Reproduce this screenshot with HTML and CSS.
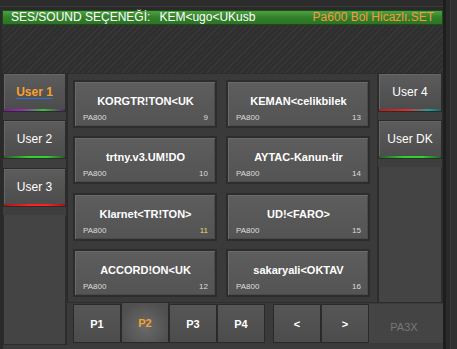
FILE: index.html
```html
<!DOCTYPE html>
<html>
<head>
<meta charset="utf-8">
<link rel="stylesheet" href="styles.css">
</head>
<body>
<div class="screen">
  <div class="frame">
    <div class="topline"></div>
    <div class="header">
      <div class="hleft"><span class="hlabel">SES/SOUND SEÇENEĞİ:</span><span class="hval">KEM&lt;ugo&lt;UKusb</span></div>
      <div class="hright">Pa600 Bol Hicazlı.SET</div>
    </div>
    <div class="stripes"></div>
    <div class="main">
      <div class="lcol">
        <div class="ubtn active"><span>User 1</span><i class="bar b1"></i></div>
        <div class="ubtn"><span>User 2</span><i class="bar b2"></i></div>
        <div class="ubtn"><span>User 3</span><i class="bar b3"></i></div>
        <div class="fill"></div>
      </div>
      <div class="panel">
        <div class="card"><div class="title">KORGTR!TON&lt;UK</div><div class="meta"><span>PA800</span><span>9</span></div></div>
        <div class="card"><div class="title">KEMAN&lt;celikbilek</div><div class="meta"><span>PA800</span><span>13</span></div></div>
        <div class="card"><div class="title">trtny.v3.UM!DO</div><div class="meta"><span>PA800</span><span>10</span></div></div>
        <div class="card"><div class="title">AYTAC-Kanun-tir</div><div class="meta"><span>PA800</span><span>14</span></div></div>
        <div class="card"><div class="title">Klarnet&lt;TR!TON&gt;</div><div class="meta"><span>PA800</span><span class="num-y">11</span></div></div>
        <div class="card"><div class="title">UD!&lt;FARO&gt;</div><div class="meta"><span>PA800</span><span>15</span></div></div>
        <div class="card"><div class="title">ACCORD!ON&lt;UK</div><div class="meta"><span>PA800</span><span>12</span></div></div>
        <div class="card"><div class="title">sakaryali&lt;OKTAV</div><div class="meta"><span>PA800</span><span>16</span></div></div>
      </div>
      <div class="rcol">
        <div class="ubtn"><span>User 4</span><i class="bar b4"></i></div>
        <div class="ubtn"><span>User DK</span><i class="bar b5"></i></div>
        <div class="fill"></div>
      </div>
      <div class="bottom">
        <div class="pbtn">P1</div>
        <div class="pbtn sel">P2</div>
        <div class="pbtn">P3</div>
        <div class="pbtn">P4</div>
        <div class="sep"></div>
        <div class="pbtn">&lt;</div>
        <div class="pbtn">&gt;</div>
        <div class="pa3x">PA3X</div>
      </div>
    </div>
  </div>
  <div class="rightedge"></div>
</div>
</body>
</html>
```

FILE: styles.css
```css
* { box-sizing: border-box; margin: 0; padding: 0; }
html, body { width: 457px; height: 349px; overflow: hidden; }
body {
  background: #2a2a2a;
  font-family: "Liberation Sans", Arial, sans-serif;
  color: #fff;
}
.screen { display: flex; height: 349px; }
.frame { width: 443px; display: flex; flex-direction: column; }
.rightedge {
  width: 14px;
  border-left: 3px solid #1e1e1e;
  background: linear-gradient(90deg, #2a2a2a 0 4px, #3a3a3a 4px 5px, #303030 5px);
}
.topline {
  height: 10px;
  background: linear-gradient(#2c2c2c 0 6px, #3a3a3a 6px 7px, #2a2a2a 7px);
}
.header {
  height: 15px;
  margin-left: 2px;
  border: 1px solid #1c4a18;
  background: linear-gradient(#4fa042, #32802a 50%, #2c7424);
  display: flex;
  align-items: center;
  justify-content: space-between;
  padding: 0 8px 0 8px;
  font-size: 12px;
  line-height: 13px;
}
.hlabel { color: #fff; }
.hval { color: #fff; margin-left: 9px; }
.hright { color: #f59a40; }
.stripes {
  height: 48px;
  margin-left: 2px;
  background: repeating-linear-gradient(135deg, #2f2f2f 0 2px, #383838 2px 3px, #2f2f2f 3px 4px);
}
.main {
  flex: 1;
  display: grid;
  grid-template-columns: 64px 311px 65px;
  grid-template-rows: 230px 42px;
  margin-left: 3px;
  background: #3c3c3c;
}
.lcol {
  grid-row: 1 / 3;
  grid-column: 1;
  display: flex;
  flex-direction: column;
  gap: 8px;
  background: #3e3e3e;
  border-right: 1px solid #2c2c2c;
}
.lcol .ubtn:nth-child(3) { margin-top: 1px; }
.rcol {
  grid-row: 1;
  grid-column: 3;
  display: flex;
  flex-direction: column;
  gap: 8px;
  background: #3e3e3e;
  border-right: 1px solid #2c2c2c;
}
.ubtn {
  position: relative;
  height: 39px;
  border: 1px solid #2b2b2b;
  background: linear-gradient(#5c5c5c, #525252 60%, #4c4c4c);
  box-shadow: inset 1px 1px 0 #666;
  display: flex;
  align-items: center;
  justify-content: center;
  font-size: 12px;
  color: #fff;
  padding-bottom: 2px;
}
.ubtn.active span {
  color: #f7a030;
  font-weight: bold;
  text-decoration: underline;
  text-decoration-color: #2f6fd0;
  text-underline-offset: 2px;
}
.bar { position: absolute; left: 0; right: 0; bottom: 0; height: 2px; }
.b1 { background: linear-gradient(90deg, #7a2090, #9030b0 30%, #40c040 65%, #5a2070); }
.b2 { background: linear-gradient(90deg, #2a5a2a, #30d030 40%, #30d030 70%, #2a5a2a); }
.b3 { background: linear-gradient(90deg, #a01818, #ff2020 40%, #ff2020 70%, #a01818); }
.b4 { background: linear-gradient(90deg, #b02020, #e02a2a 45%, #20a0a0 80%, #206060); }
.b5 { background: linear-gradient(90deg, #2a5a2a, #30d030 40%, #30d030 70%, #2a5a2a); }
.fill {
  flex: 1;
  background: #444;
  border: 1px solid #2c2c2c;
  border-top: 0;
}
.panel {
  grid-row: 1;
  grid-column: 2;
  background: #3a3a3a;
  border: 1px solid #2e2e2e;
  border-left-color: #2a2a2a;
  padding: 6px 7px 4px 5px;
  display: grid;
  grid-template-columns: 144px 144px;
  grid-auto-rows: 48px;
  column-gap: 9px;
  row-gap: 8.3px;
}
.card {
  border: 2px solid #2d2d2d;
  background: linear-gradient(#5e5e5e, #585858 50%, #545454);
  box-shadow: inset 1px 1px 0 #6a6a6a, inset -1px -1px 0 #4a4a4a;
  display: flex;
  flex-direction: column;
  padding: 0 7px 3px 8px;
}
.title {
  flex: 1;
  display: flex;
  align-items: center;
  justify-content: center;
  font-weight: bold;
  font-size: 11px;
  padding-top: 7px;
  color: #fff;
}
.meta {
  display: flex;
  justify-content: space-between;
  font-size: 8px;
  color: #ddd;
  line-height: 10px;
}
.meta .num-y { color: #e8d870; }
.bottom {
  grid-row: 2;
  grid-column: 2 / 4;
  display: flex;
  padding: 1px 0 2px 6px;
  background: #3a3a3a;
}
.pbtn {
  width: 48px;
  border: 1px solid #2a2a2a;
  background: linear-gradient(#565656, #4c4c4c);
  display: flex;
  align-items: center;
  justify-content: center;
  font-size: 11px;
  font-weight: bold;
  color: #fff;
}
.pbtn.sel {
  color: #f7a030;
  margin-top: -2px;
  background: radial-gradient(ellipse at 50% 60%, #6a6a6a, #505050 75%);
}
.sep { width: 8px; background: #3a3a3a; }
.pa3x {
  flex: 1;
  background: #444;
  display: flex;
  align-items: center;
  justify-content: center;
  padding-top: 6px;
  padding-right: 4px;
  font-size: 11px;
  color: #777;
}
```
